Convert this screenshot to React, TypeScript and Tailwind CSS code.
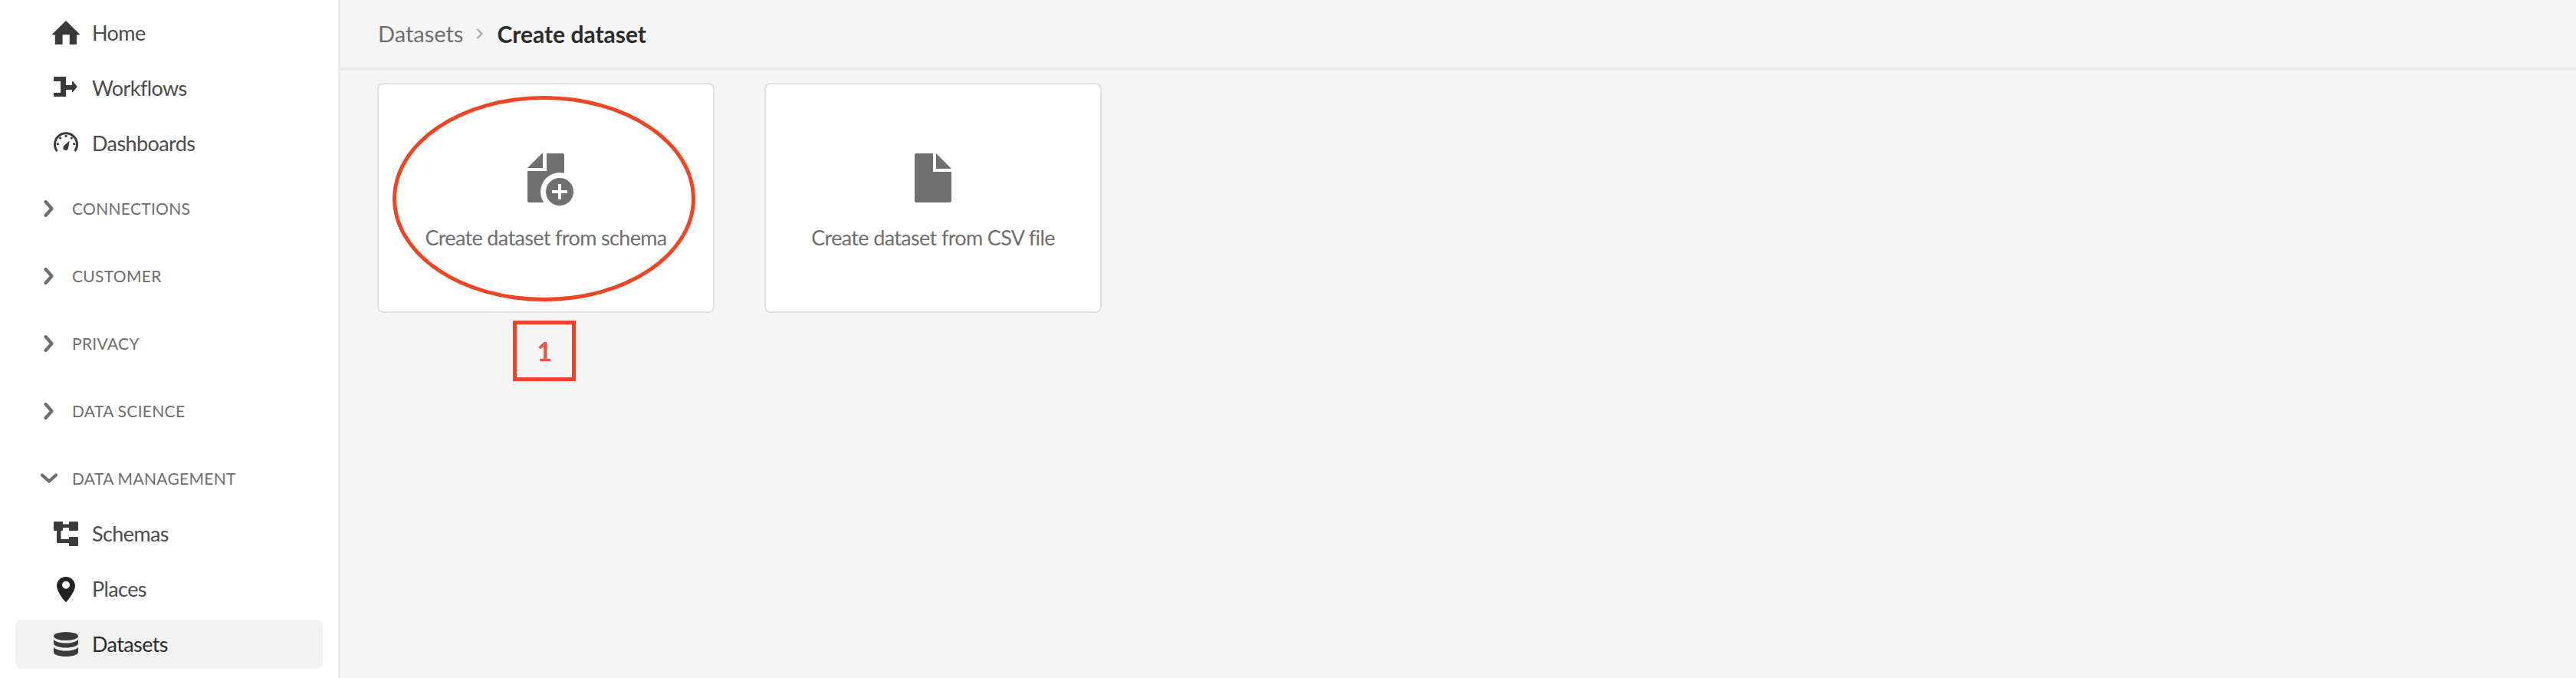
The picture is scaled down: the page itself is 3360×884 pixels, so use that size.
import type { ReactNode } from 'react'

const FONT = 'font-["Lato","Noto_Sans",sans-serif]'

function HomeIcon() {
  return (
    <svg viewBox="0 0 36 36" className="h-9 w-9 shrink-0 fill-[#3a3a3a]">
      <path d="M18 2 35.6 19.2c.6.6.2 1.3-.6 1.3H32V33H22.8V20.2h-9.2V33H3.800V20.500H1c-.8 0-1.200-.7-.6-1.300L18 2Z" />
    </svg>
  )
}

function WorkflowIcon() {
  return (
    <svg viewBox="0 0 36 36" className="h-9 w-9 shrink-0 fill-[#3a3a3a]">
      <path d="M3 3h15v11h8V9.500c0-.6.6-.8 1-.4l5.400 6.400c.3.3.3.7 0 1L27 22.900c-.4.4-1 .2-1-.4V20h-8v9H3a1 1 0 0 1-1-1v-4h9V9H2V4a1 1 0 0 1 1-1Z" />
    </svg>
  )
}

function GaugeIcon() {
  return (
    <svg viewBox="0 0 36 36" className="h-9 w-9 shrink-0 fill-[#3a3a3a]">
      <path d="M6.400 28A14.500 14.500 0 1 1 29.600 28" fill="none" stroke="#3a3a3a" strokeWidth="3" />
      <circle cx="7.300" cy="18.700" r="1.600" />
      <circle cx="10.700" cy="11" r="1.600" />
      <circle cx="18" cy="8.300" r="1.600" />
      <circle cx="25.300" cy="11" r="1.600" />
      <circle cx="28.700" cy="18.700" r="1.600" />
      <path d="M22.700 14.500 21 24.500a3.400 3.400 0 1 1-5.800-3.200l7.500-6.800Z" />
    </svg>
  )
}

function SchemaIcon() {
  return (
    <svg viewBox="0 0 36 36" className="h-9 w-9 shrink-0 fill-[#3a3a3a]">
      <rect x="2" y="2" width="12" height="12" rx="1" />
      <rect x="22" y="2" width="12" height="12" rx="1" />
      <rect x="22" y="22" width="12" height="12" rx="1" />
      <path d="M14 5.500h8v4.500h-8zM6 14h5.500v11H22v5H7a1 1 0 0 1-1-1V14Z" />
    </svg>
  )
}

function PinIcon() {
  return (
    <svg viewBox="0 0 36 36" className="h-9 w-9 shrink-0 fill-[#222222]">
      <path
        fillRule="evenodd"
        d="M18 2C11.400 2 6 7.200 6 13.800c0 7.200 8.400 17.400 11.200 20.800.4.500 1.200.5 1.600 0C21.600 31.200 30 21 30 13.800 30 7.200 24.600 2 18 2Zm0 15.700a5 5 0 1 1 0-10 5 5 0 0 1 0 10Z"
      />
    </svg>
  )
}

function DataIcon() {
  return (
    <svg viewBox="0 0 36 36" className="h-9 w-9 shrink-0 fill-[#3a3a3a]">
      <ellipse cx="18" cy="7.500" rx="16" ry="5.500" />
      <path d="M2 11.500C4 15 10.500 16.500 18 16.500S32 15 34 11.500V17c0 3-7.200 5.500-16 5.500S2 20 2 17v-5.500Z" />
      <path d="M2 21.500C4 25 10.500 26.500 18 26.500S32 25 34 21.500V28.500c0 3-7.200 5.500-16 5.500S2 31.500 2 28.500v-7Z" />
    </svg>
  )
}

function Chevron({ open }: { open?: boolean }) {
  return (
    <svg viewBox="0 0 24 24" className="h-6 w-6 shrink-0">
      <path
        d={open ? 'M3 7.500l9 8 9-8' : 'M7.500 3l8 9-8 9'}
        fill="none"
        stroke="#6e6e6e"
        strokeWidth="4.200"
        strokeLinecap="round"
        strokeLinejoin="round"
      />
    </svg>
  )
}

function NavItem({ icon, label, active }: { icon: ReactNode; label: string; active?: boolean }) {
  return (
    <div
      className={`mx-5 flex h-16 items-center gap-[16px] rounded-lg pl-12 text-[27px] tracking-[-0.6px] ${
        active ? 'bg-[#f2f2f2] text-[#2c2c2c]' : 'text-[#4b4b4b]'
      }`}
    >
      {icon}
      <span>{label}</span>
    </div>
  )
}

function SectionHeader({ label, open, first }: { label: string; open?: boolean; first?: boolean }) {
  return (
    <div
      className={`flex h-16 items-center gap-[18px] pl-[52px] text-[21px] tracking-[0.3px] text-[#6e6e6e] ${
        first ? 'mt-[13px]' : 'mt-4'
      }`}
    >
      <Chevron open={open} />
      <span>{label}</span>
    </div>
  )
}

function Card({ icon, label, children }: { icon: ReactNode; label: string; children?: ReactNode }) {
  return (
    <div className="relative flex h-[300px] w-[440px] flex-col items-center rounded-lg border-2 border-[#e1e1e1] bg-white pt-[86px]">
      {icon}
      <p className="mt-[22px] text-[27px] leading-10 tracking-[-0.65px] text-[#6e6e6e]">{label}</p>
      {children}
    </div>
  )
}

export default function App() {
  return (
    <div className={`flex h-[884px] w-[3360px] overflow-hidden bg-[#f5f5f5] ${FONT}`}>
      <aside className="flex w-[444px] shrink-0 flex-col gap-2 border-r-[3px] border-[#eaeaea] bg-white pt-[11px]">
        <NavItem icon={<HomeIcon />} label="Home" />
        <NavItem icon={<WorkflowIcon />} label="Workflows" />
        <NavItem icon={<GaugeIcon />} label="Dashboards" />
        <SectionHeader label="CONNECTIONS" first />
        <SectionHeader label="CUSTOMER" />
        <SectionHeader label="PRIVACY" />
        <SectionHeader label="DATA SCIENCE" />
        <SectionHeader label="DATA MANAGEMENT" open />
        <NavItem icon={<SchemaIcon />} label="Schemas" />
        <NavItem icon={<PinIcon />} label="Places" />
        <NavItem icon={<DataIcon />} label="Datasets" active />
      </aside>

      <main className="flex min-w-0 flex-1 flex-col">
        <header className="flex h-[92px] items-center border-b-4 border-[#ebebeb] pl-[49px]">
          <span className="text-[29px] text-[#6e6e6e]">Datasets</span>
          <svg viewBox="0 0 12 16" className="mx-4 h-4 w-3">
            <path d="M2.500 2l6 6-6 6" fill="none" stroke="#a8a8a8" strokeWidth="2.200" />
          </svg>
          <span className="text-[30px] font-bold text-[#2c2c2c]">Create dataset</span>
        </header>

        <div className="flex items-start gap-[65px] pl-[48px] pt-4">
          <div className="flex flex-col items-center">
            <Card
              label="Create dataset from schema"
              icon={
                <svg viewBox="0 0 72 72" className="h-[72px] w-[72px] fill-[#707070]">
                  <path d="M12 23 32 3v20H12ZM37 4h21a2 2 0 0 1 2 2v21H38a1 1 0 0 1-1-1V4ZM12 27h48v41H14a2 2 0 0 1-2-2V27Z" />
                  <circle cx="54" cy="54" r="25" fill="#ffffff" />
                  <circle cx="54" cy="54" r="18" />
                  <path d="M52 44h4v8h8v4h-8v8h-4v-8h-8v-4h8z" fill="#ffffff" />
                </svg>
              }
            >
              {/* red callout ring drawn over the card */}
              <div className="absolute left-[18px] top-[15px] h-[268px] w-[395px] rounded-[50%] border-[5px] border-[#ee4525]" />
            </Card>
            <div className="mr-1 mt-[10px] flex h-[79px] w-[82px] items-center justify-center border-[5px] border-[#ee4525] text-[34px] font-bold text-[#f0504a]">
              1
            </div>
          </div>

          <Card
            label="Create dataset from CSV file"
            icon={
              <svg viewBox="0 0 72 72" className="h-[72px] w-[72px] fill-[#707070]">
                <path d="M14 4h22v24h24v38a2 2 0 0 1-2 2H14a2 2 0 0 1-2-2V6a2 2 0 0 1 2-2ZM40 4l20 20H40V4Z" />
              </svg>
            }
          />
        </div>
      </main>
    </div>
  )
}
